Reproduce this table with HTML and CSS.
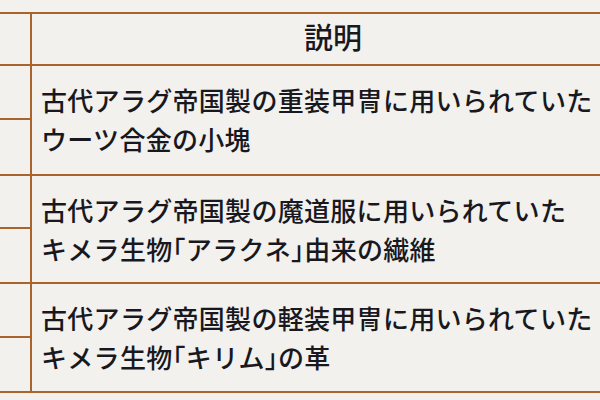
FILE: index.html
```html
<!DOCTYPE html>
<html lang="ja">
<head>
<meta charset="utf-8">
<title>説明</title>
<link rel="stylesheet" href="styles.css">
</head>
<body>
<div class="table">
  <div class="cell side"></div>
  <div class="cell head">説明</div>

  <div class="cell side"></div>
  <div class="cell desc span">古代アラグ帝国製の重装甲冑に用いられていた<br>ウーツ合金の小塊</div>
  <div class="cell side"></div>

  <div class="cell side"></div>
  <div class="cell desc span">古代アラグ帝国製の魔道服に用いられていた<br>キメラ生物<span class="bracket">「</span>アラクネ<span class="bracket">」</span>由来の繊維</div>
  <div class="cell side"></div>

  <div class="cell side"></div>
  <div class="cell desc span">古代アラグ帝国製の軽装甲冑に用いられていた<br>キメラ生物<span class="bracket">「</span>キリム<span class="bracket">」</span>の革</div>
  <div class="cell side"></div>
</div>
</body>
</html>
```

FILE: styles.css
```css
html, body {
  margin: 0;
  padding: 0;
  background: #f2f1ed;
  overflow: hidden;
  width: 600px;
  height: 400px;
}

body {
  padding-top: 12px;
  box-sizing: border-box;
}

.table {
  display: grid;
  grid-template-columns: 30px 604px;
  grid-template-rows: 52px 54px 56px 53px 55px 54px 55px;
  width: 634px;
  border-bottom: 2px solid #a9642b;
  font-family: "Noto Sans CJK JP", "Noto Sans", sans-serif;
  font-weight: 500;
  color: #18181e;
}

.cell {
  border-top: 2px solid #a9642b;
  box-sizing: border-box;
}

.side {
  grid-column: 1;
}

.head {
  grid-column: 2;
  border-left: 2px solid #a9642b;
  display: flex;
  align-items: center;
  justify-content: center;
  font-size: 29px;
  line-height: 1;
  padding-bottom: 5px;
}

.desc {
  grid-column: 2;
  border-left: 2px solid #a9642b;
  display: block;
  padding: 14px 0 0 9px;
  font-size: 26px;
  line-height: 39px;
  letter-spacing: 0.3px;
  white-space: nowrap;
}

.span {
  grid-row: span 2;
}

.bracket {
  font-feature-settings: "halt" 1;
}
```
